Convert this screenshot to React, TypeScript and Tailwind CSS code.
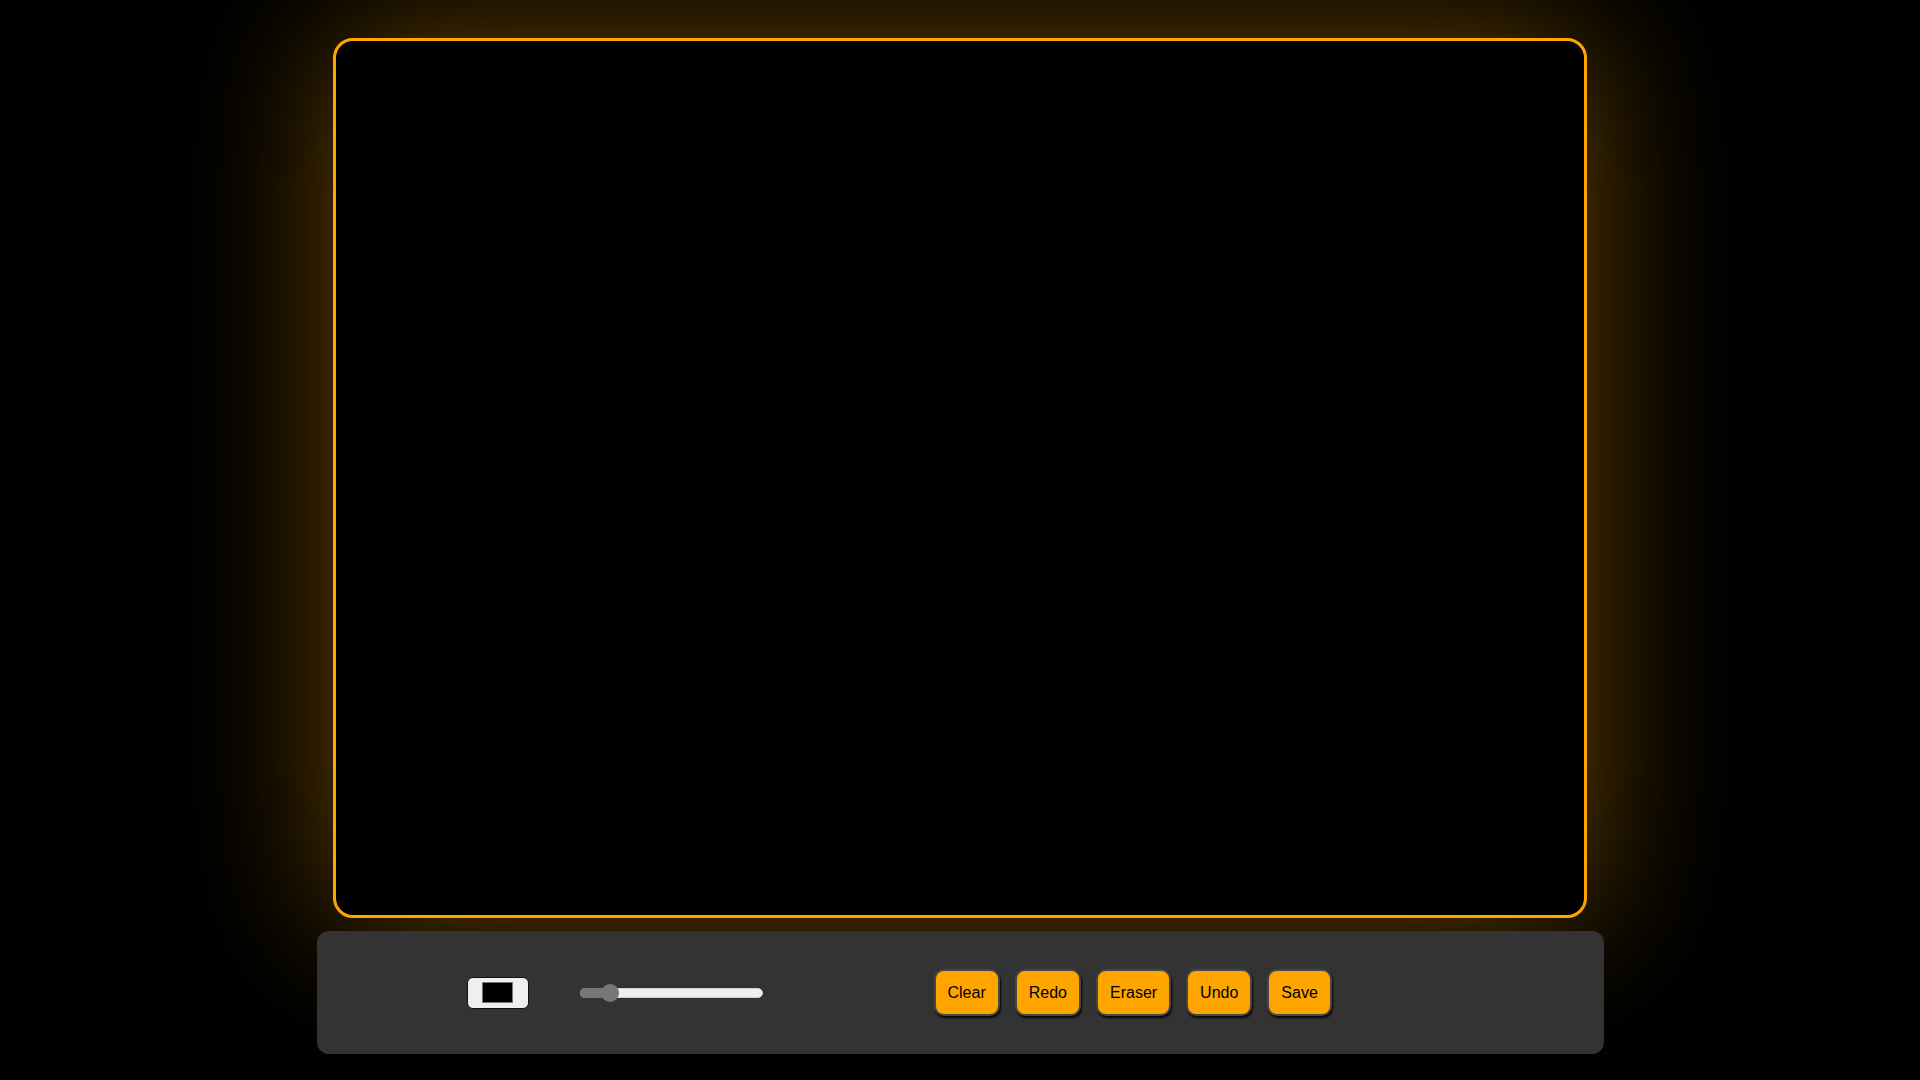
import React from "react"

const buttons = ["Clear", "Redo", "Eraser", "Undo", "Save"]

function ColorSwatch() {
  return (
    <div className="flex h-[32px] w-[62px] shrink-0 items-center justify-center rounded-[6px] border border-[#111] bg-[#efefef]">
      <div className="h-[21px] w-[31px] border border-[#777] bg-black" />
    </div>
  )
}

function SizeSlider() {
  return (
    <div className="relative h-[10px] w-[183px] shrink-0 rounded-full border border-[#cfcfcf] bg-[#efefef]">
      <div className="absolute inset-y-[-1px] left-[-1px] w-[30px] rounded-full bg-[#777]" />
      <div className="absolute left-[20px] top-1/2 h-[18px] w-[18px] -translate-y-1/2 rounded-full bg-[#777]" />
    </div>
  )
}

export default function App() {
  return (
    <div
      className="flex h-[1080px] w-full flex-col items-center overflow-hidden bg-black pt-[38px]"
      style={{ fontFamily: '"Liberation Sans", Arial, sans-serif' }}
    >
      {/* drawing area */}
      <div className="h-[880px] w-[1254px] shrink-0 rounded-[20px] border-[3px] border-[#ffa500] bg-black shadow-[0_0_150px_rgba(255,165,0,0.42)]" />

      {/* toolbar */}
      <div className="relative mt-[13px] flex h-[123px] w-[1287px] shrink-0 items-center rounded-[12px] bg-[#333] pl-[150px]">
        <ColorSwatch />
        <div className="ml-[51px]">
          <SizeSlider />
        </div>
        <div className="ml-[171px] flex items-center gap-[15px]">
          {buttons.map((b) => (
            <button
              key={b}
              className="rounded-[10px] border-2 border-[#474747] bg-[#ffa500] px-3 py-3 text-[16px] leading-[19px] text-black shadow-[1px_2px_2px_rgba(0,0,0,0.9)]"
            >
              {b}
            </button>
          ))}
        </div>
      </div>
    </div>
  )
}
